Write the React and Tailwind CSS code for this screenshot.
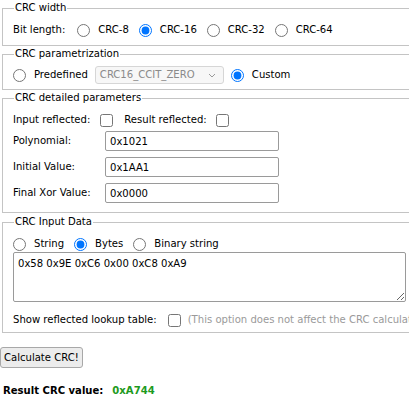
function Radio({ checked, label, className = "" }) {
    return (
        <span className={"inline-flex items-center " + className}>
            <input type="radio" readOnly checked={checked} className="m-0 w-[13px] h-[13px] mr-[8px]" />
            <span>{label}</span>
        </span>
    );
}

function Field({ legend, children, className = "" }) {
    return (
        <fieldset className={"ml-[2px] w-[416px] min-w-0 border border-[#c4c4c4] px-[10px] " + className}>
            <legend className="ml-[1px] px-[1px] leading-[16px]">{legend}</legend>
            {children}
        </fieldset>
    );
}

export default function App() {
    return (
        <div className="w-[409px] h-[400px] overflow-hidden bg-white text-black text-[11.2px] leading-[16px] font-['DejaVu_Sans_Condensed','DejaVu_Sans',sans-serif] font-stretch-condensed whitespace-nowrap">
            {/* CRC width */}
            <Field legend="CRC width" className="pt-[6px] pb-[7px]">
                <div className="flex items-center h-[16px]">
                    <span className="mr-[12px]">Bit length:</span>
                    <Radio label="CRC-8" className="mr-[10px]" />
                    <Radio label="CRC-16" checked className="mr-[10px]" />
                    <Radio label="CRC-32" className="mr-[10px]" />
                    <Radio label="CRC-64" />
                </div>
            </Field>

            {/* CRC parametrization */}
            <Field legend="CRC parametrization" className="pt-[4px] pb-[5px]">
                <div className="flex items-center h-[18px]">
                    <Radio label="Predefined" className="mr-[7px]" />
                    <div className="flex items-center justify-between w-[129px] h-[18px] mr-[7px] px-[4px] border border-[#d6d6d6] rounded-[3px] bg-[#f7f7f7] text-[#8a8a8a]">
                        <span>CRC16_CCIT_ZERO</span>
                        <svg width="8" height="5" viewBox="0 0 8 5" className="mr-[3px]">
                            <path d="M1 1l3 3 3-3" fill="none" stroke="#9a9a9a" strokeWidth="1" />
                        </svg>
                    </div>
                    <Radio label="Custom" checked />
                </div>
            </Field>

            {/* CRC detailed parameters */}
            <Field legend="CRC detailed parameters" className="pt-[6px] pb-[9px]">
                <div className="flex items-center h-[16px]">
                    <span className="mr-[10px]">Input reflected:</span>
                    <input type="checkbox" readOnly className="m-0 w-[13px] h-[13px] mr-[11px]" />
                    <span className="mr-[9px]">Result reflected:</span>
                    <input type="checkbox" readOnly className="m-0 w-[13px] h-[13px]" />
                </div>
                <div className="grid grid-cols-[92px_174px] gap-y-[6px] mt-[3px] items-center">
                    <span>Polynomial:</span>
                    <input readOnly value="0x1021" className="h-[20px] px-[4px] border border-[#9a9a9a] rounded-[2px] outline-none" />
                    <span>Initial Value:</span>
                    <input readOnly value="0x1AA1" className="h-[20px] px-[4px] border border-[#9a9a9a] rounded-[2px] outline-none" />
                    <span>Final Xor Value:</span>
                    <input readOnly value="0x0000" className="h-[20px] px-[4px] border border-[#9a9a9a] rounded-[2px] outline-none" />
                </div>
            </Field>

            {/* CRC Input Data */}
            <Field legend="CRC Input Data" className="mt-px pt-[6px] pb-[4px]">
                <div className="flex items-center h-[16px]">
                    <Radio label="String" className="mr-[10px]" />
                    <Radio label="Bytes" checked className="mr-[10px]" />
                    <Radio label="Binary string" />
                </div>
                <textarea
                    readOnly
                    value="0x58 0x9E 0xC6 0x00 0xC8 0xA9"
                    className="block mt-0 w-[393px] h-[50px] px-[4px] py-[3px] border border-[#9a9a9a] rounded-[2px] outline-none"
                />
                <div className="flex items-center h-[16px] mt-[10px]">
                    <span className="mr-[11px]">Show reflected lookup table:</span>
                    <input type="checkbox" readOnly className="m-0 w-[13px] h-[13px] mr-[7px]" />
                    <span className="text-[#9a9a9a]">(This option does not affect the CRC calculation)</span>
                </div>
            </Field>

            <button className="mt-[14px] h-[21px] px-[3px] bg-[#ececec] border border-[#a8a8a8] rounded-[3px]">
                Calculate CRC!
            </button>

            <div className="mt-[15px] pl-[3px] font-bold">
                Result CRC value:<span className="ml-[9px] text-[#1d9a1d]">0xA744</span>
            </div>
        </div>
    );
}
